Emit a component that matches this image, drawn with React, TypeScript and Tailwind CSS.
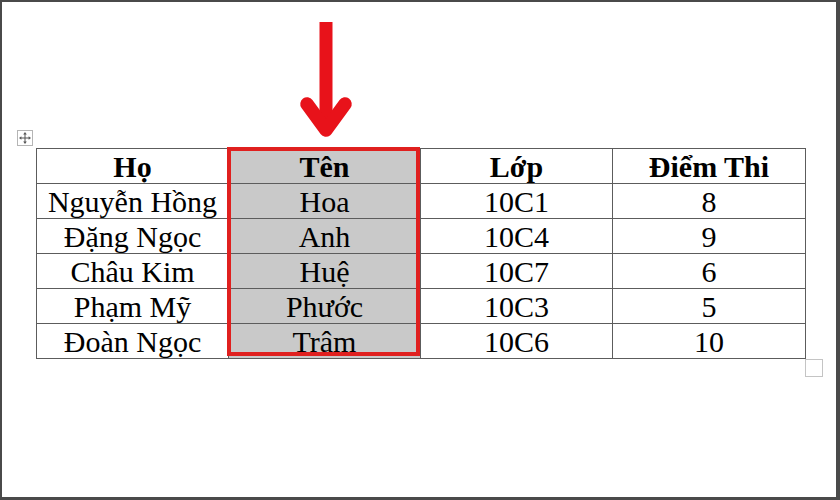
import React from "react";

const rows = [
  ["Nguyễn Hồng", "Hoa", "10C1", "8"],
  ["Đặng Ngọc", "Anh", "10C4", "9"],
  ["Châu Kim", "Huệ", "10C7", "6"],
  ["Phạm Mỹ", "Phước", "10C3", "5"],
  ["Đoàn Ngọc", "Trâm", "10C6", "10"],
];

const headers = ["Họ", "Tên", "Lớp", "Điểm Thi"];

function DownArrow() {
  return (
    <svg width="60" height="120" viewBox="0 0 60 120">
      <line x1="30" y1="2" x2="30" y2="108" stroke="#e8121a" strokeWidth="13" />
      <polyline
        points="11,84 30,110 49,84"
        fill="none"
        stroke="#e8121a"
        strokeWidth="13.5"
        strokeLinecap="round"
        strokeLinejoin="round"
      />
    </svg>
  );
}

function MoveHandle() {
  return (
    <div className="flex h-[16px] w-[16px] items-center justify-center border border-[#b5b5b5] bg-white">
      <svg width="12" height="12" viewBox="0 0 12 12" fill="#555">
        <rect x="5.5" y="2" width="1" height="8" />
        <rect x="2" y="5.5" width="8" height="1" />
        <polygon points="6,0 4.2,2.4 7.8,2.4" />
        <polygon points="6,12 4.2,9.6 7.8,9.6" />
        <polygon points="0,6 2.4,4.2 2.4,7.8" />
        <polygon points="12,6 9.6,4.2 9.6,7.8" />
      </svg>
    </div>
  );
}

export default function App() {
  return (
    <div
      className="h-[500px] w-[840px] overflow-hidden border-b-[3px] border-l-2 border-r-4 border-t-2 border-[#4a4a4a] bg-white pl-[34px] pt-[18px] text-black"
      style={{ fontFamily: '"Liberation Serif", "Times New Roman", serif' }}
    >
      <div className="grid w-[769px] grid-cols-[192px_192px_192px_193px]">
        <div className="col-start-2 flex justify-center pl-[4px]">
          <DownArrow />
        </div>
      </div>

      <div className="relative mt-[8px] w-[769px]">
        <div className="absolute left-[-19px] top-[-18px]">
          <MoveHandle />
        </div>

        <table className="w-[769px] table-fixed border-collapse border border-[#5c5c5c] text-[30px] leading-none">
          <colgroup>
            <col className="w-[192px]" />
            <col className="w-[192px]" />
            <col className="w-[192px]" />
            <col className="w-[193px]" />
          </colgroup>
          <thead>
            <tr className="h-[35px]">
              {headers.map((h, i) => (
                <th
                  key={h}
                  className={`border border-[#5c5c5c] p-0 pt-[2px] text-center align-middle font-bold ${
                    i === 1 ? "bg-[#c9c9c9]" : ""
                  }`}
                >
                  {h}
                </th>
              ))}
            </tr>
          </thead>
          <tbody>
            {rows.map((r) => (
              <tr key={r[0]} className="h-[35px]">
                {r.map((c, i) => (
                  <td
                    key={i}
                    className={`border border-[#5c5c5c] p-0 pt-[2px] text-center align-middle font-normal ${
                      i === 1 ? "bg-[#c9c9c9]" : ""
                    }`}
                  >
                    {c}
                  </td>
                ))}
              </tr>
            ))}
          </tbody>
        </table>

        {/* highlight around the Tên column */}
        <div className="pointer-events-none absolute left-[191px] top-[-1px] h-[209px] w-[193px] border-4 border-[#e0201f]" />

        <div className="absolute left-[769px] top-[211px] h-[18px] w-[18px] border border-[#c4c4c4] bg-white" />
      </div>
    </div>
  );
}
